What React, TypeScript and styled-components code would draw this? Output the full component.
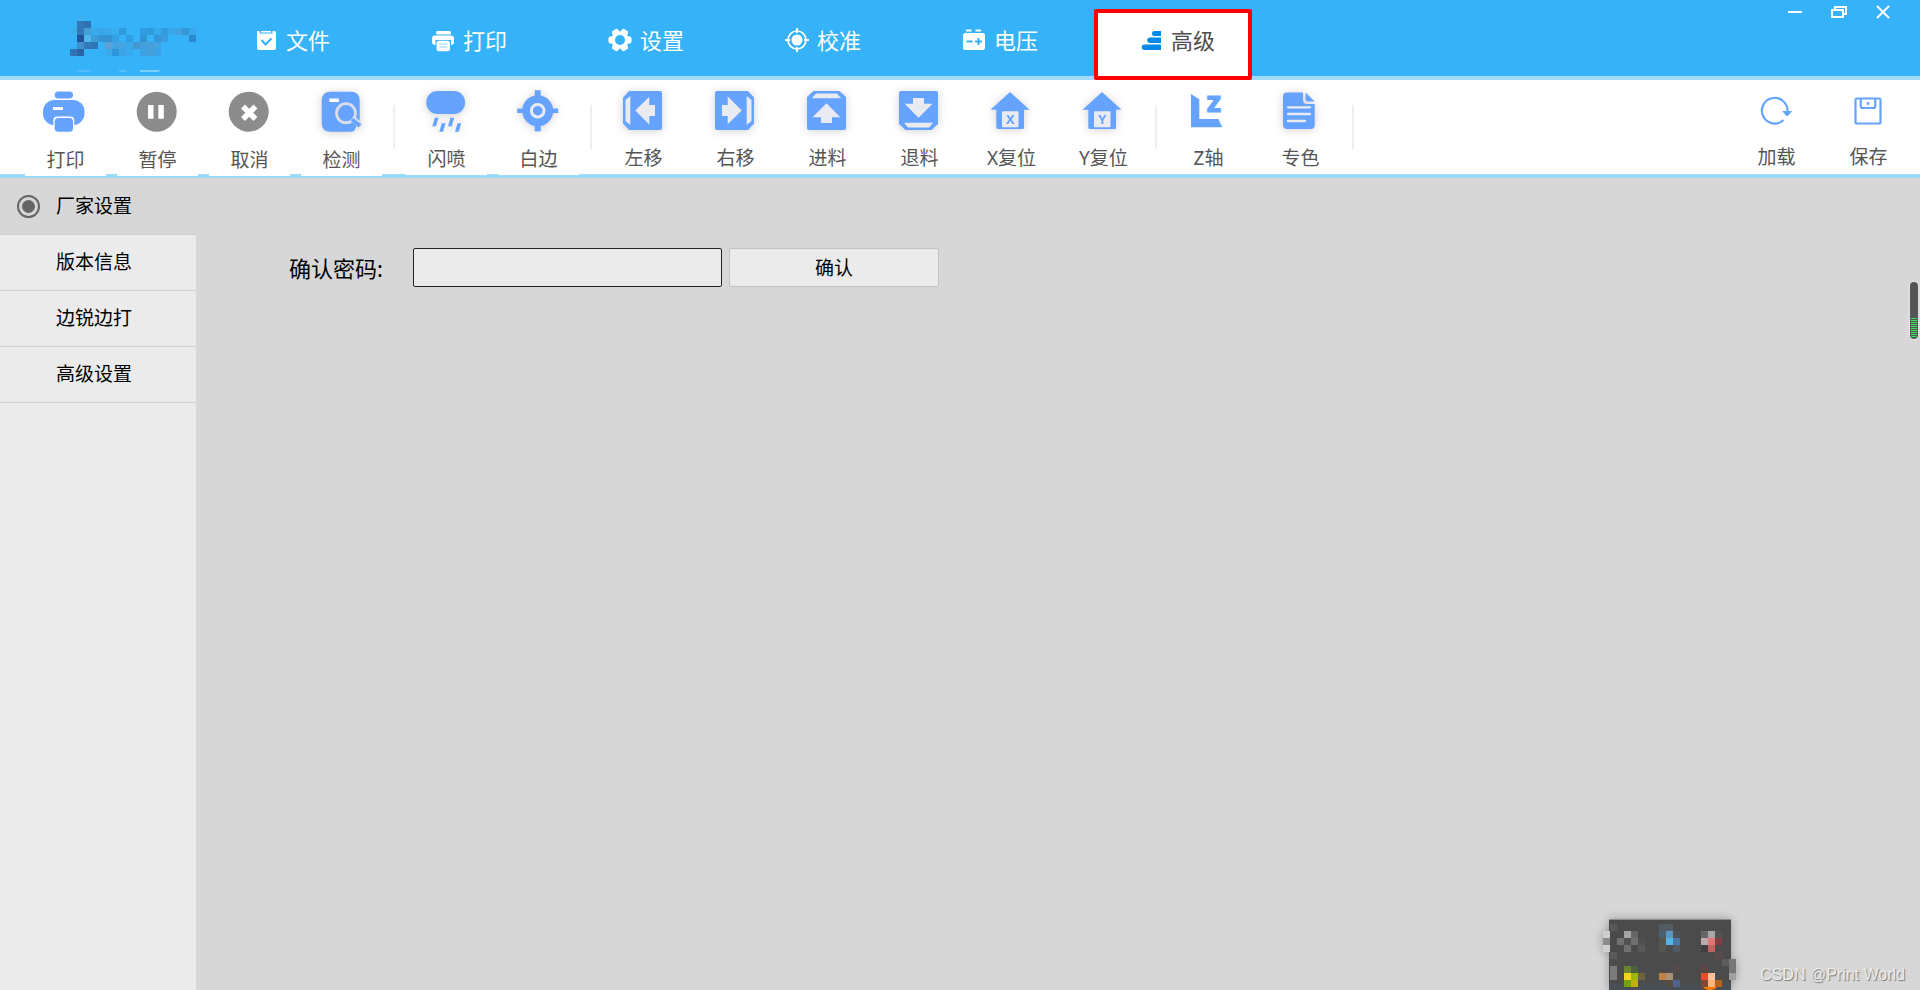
import React, { ReactNode, useState } from "react";
import styled, { createGlobalStyle } from "styled-components";

const BLUE = "#66a3ff";
const PALE = "#e9ebf0";

const GlobalStyle = createGlobalStyle`
  * { box-sizing: border-box; }
  body {
    margin: 0;
    background: #d7d7d7;
    font-family: "Noto Sans", "Noto Sans CJK SC", sans-serif;
    font-weight: 400;
  }
  button, input { font: inherit; }
`;

const Page = styled.div`
  position: relative;
  display: flex;
  flex-direction: column;
  min-height: 100vh;
  overflow: hidden;
`;

const Header = styled.header`
  display: flex;
  height: 80px;
  background: #36b3f8;
  border-bottom: 4px solid #a0dbf7;
`;

const Brand = styled.div`
  flex: none;
  width: 209px;
  padding: 14px 0 0 70px;
`;

const Tabs = styled.nav`
  display: flex;
  gap: 19px;
  height: 80px;
  padding-top: 9px;
`;

const Tab = styled.button<{ $active: boolean }>`
  display: flex;
  align-items: center;
  gap: 8px;
  width: 158px;
  height: 71px;
  padding: 0 0 10px 41px;
  border: 4px solid ${(p) => (p.$active ? "#ff0000" : "transparent")};
  border-radius: 2px;
  background: ${(p) => (p.$active ? "#fff" : "transparent")};
  background-clip: padding-box;
  color: ${(p) => (p.$active ? "#4d4d4d" : "#fff")};
  font-size: 22px;
  line-height: 32px;
  white-space: nowrap;
`;

const WindowControls = styled.div`
  display: flex;
  margin-left: auto;
  padding-right: 15px;
`;

const WindowButton = styled.button`
  display: flex;
  align-items: center;
  justify-content: center;
  width: 44px;
  height: 24px;
  padding: 0;
  border: 0;
  background: transparent;
`;

const Toolbar = styled.div`
  display: flex;
  align-items: flex-start;
  gap: 11px;
  height: 98px;
  padding: 0 11px 0 25px;
  background: #fff;
  border-bottom: 4px solid #9bdcf8;
`;

const ToolButton = styled.button<{ $height: number }>`
  display: flex;
  flex: none;
  flex-direction: column;
  align-items: center;
  justify-content: flex-end;
  gap: 14px;
  width: 81px;
  height: ${(p) => p.$height}px;
  padding: 0 0 4px;
  border: 0;
  background: #fff;
  color: #555;
  font-size: 19px;
  line-height: 24px;
  white-space: nowrap;
`;

const ToolIcon = styled.svg<{ $shadow: boolean }>`
  display: block;
  width: 41px;
  height: 44px;
  overflow: visible;
  filter: ${(p) => (p.$shadow ? "drop-shadow(0 1px 4px rgba(0, 0, 0, 0.18))" : "none")};
`;

const Divider = styled.span`
  flex: none;
  width: 2px;
  height: 44px;
  margin-top: 25px;
  background: #efefef;
`;

const Spacer = styled.span`
  flex: 1;
`;

const Body = styled.div`
  display: flex;
  flex: 1;
`;

const Sidebar = styled.aside`
  flex: none;
  width: 196px;
  background: #ebebeb;
  border-top: 1px solid #d7d7d7;
`;

const SideItem = styled.label<{ $active: boolean }>`
  display: flex;
  align-items: center;
  gap: 16px;
  height: 56px;
  padding: 0 0 1px 17px;
  border-bottom: 1px solid #cfcfcf;
  background: ${(p) => (p.$active ? "#d7d7d7" : "transparent")};
  color: #000;
  font-size: 19px;
  line-height: 28px;
`;

const SideRadio = styled.input`
  appearance: none;
  width: 23px;
  height: 23px;
  margin: 0;
  border: 2px solid transparent;
  border-radius: 50%;
  background-clip: content-box;
  padding: 3px;
  &:checked {
    border-color: #666;
    background-color: #666;
  }
`;

const Main = styled.main`
  flex: 1;
  padding: 70px 0 0 93px;
`;

const PasswordForm = styled.form`
  display: flex;
  align-items: center;
`;

const FieldLabel = styled.label`
  width: 124px;
  color: #000;
  font-size: 22px;
  line-height: 32px;
`;

const PasswordInput = styled.input`
  width: 309px;
  height: 39px;
  padding: 0 8px;
  border: 1px solid #222;
  border-radius: 2px;
  background: #ebebeb;
  font-size: 18px;
  outline: none;
`;

const ConfirmButton = styled.button`
  width: 210px;
  height: 39px;
  margin-left: 7px;
  padding: 0;
  border: 1px solid #c3c3c3;
  border-radius: 2px;
  background: #ebebeb;
  color: #000;
  font-size: 19px;
  line-height: 28px;
`;

const Gauge = styled.div`
  position: absolute;
  top: 282px;
  right: 2px;
  display: flex;
  align-items: flex-end;
  width: 8px;
  height: 57px;
  padding: 1px;
  border-radius: 4px;
  background: #555;
  box-shadow: 0 0 2px 1px #e6e6e6;
`;

const GaugeLevel = styled.div`
  width: 6px;
  height: 20px;
  border-radius: 0 0 3px 3px;
  background: repeating-linear-gradient(#35e05c 0 1px, #555 1px 2px);
`;

const Tray = styled.div`
  position: absolute;
  right: 184px;
  bottom: 0;
  height: 73px;
  filter: drop-shadow(0 0 5px rgba(0, 0, 0, 0.3));
`;

const Watermark = styled.div`
  position: absolute;
  right: 15px;
  bottom: 3px;
  color: #ececec;
  font-family: "Liberation Sans", Arial, sans-serif;
  font-size: 16px;
  line-height: 24px;
  text-shadow: 1px 1px 1px #777;
`;

/* Pixel mosaics: [column, row, colour, run length] on a 7px grid */
type Cell = [number, number, string, number?];

const logoCells: Cell[] = [
  [1, 0, "#3db0f3"],
  [1, 1, "#3379b7"], [2, 1, "#2c72b4"],
  [0, 2, "#3eabeb"], [1, 2, "#3379b3"], [2, 2, "#449fd6"], [3, 2, "#38aaee"], [4, 2, "#3aa6ea"],
  [5, 2, "#39a8ec"], [6, 2, "#37aeee"], [7, 2, "#309bdc"], [10, 2, "#309fe2"], [11, 2, "#2f9bdc"],
  [12, 2, "#35aaee"], [13, 2, "#2f9de0"], [14, 2, "#38a8ea"], [15, 2, "#42a3e2"], [16, 2, "#3397d6"], [17, 2, "#35a8ec"],
  [1, 3, "#22539a"], [2, 3, "#53b6ec"], [3, 3, "#3c9cda"], [4, 3, "#3393d4", 2], [6, 3, "#35a0e0"],
  [8, 3, "#2f9fe4"], [10, 3, "#3093d6"], [12, 3, "#3398da"], [13, 3, "#3a9bde"], [17, 3, "#2c8acf"],
  [1, 4, "#408fcb"], [2, 4, "#3379b8"], [3, 4, "#2d76b8"], [5, 4, "#5c9fd2"], [6, 4, "#45a5e0", 2],
  [8, 4, "#38a9ec"], [9, 4, "#4597d2"], [10, 4, "#3fa0dc"], [11, 4, "#489dd6"], [12, 4, "#42a4e0"],
  [0, 5, "#3174b3"], [1, 5, "#2866a8"], [5, 5, "#3cabea"], [6, 5, "#2b98dd"], [7, 5, "#3aa4e6"],
  [8, 5, "#35aaf0"], [10, 5, "#3fa3e2"], [11, 5, "#45a0dc"], [12, 5, "#35a3e6"],
];

const trayCells: Cell[] = [
  [0, 2, "#cfcfcf"], [0, 3, "#8a8a8a"], [0, 4, "#cfcfcf"],
  [1, 1, "#5a5a5a"], [1, 5, "#5a5a5a"], [1, 7, "#7b7b7b"], [1, 8, "#7b7b7b"],
  [3, 2, "#a5a5a5"], [4, 2, "#666"], [2, 3, "#707070"], [3, 3, "#525252"], [4, 3, "#707070"],
  [3, 4, "#707070"], [5, 4, "#585858"], [5, 3, "#505050"],
  [8, 1, "#515a60"], [9, 1, "#515e66"], [8, 2, "#486070"], [9, 2, "#5a98c4"], [10, 2, "#4a5056"],
  [8, 3, "#56544f"], [9, 3, "#4fb4e9"], [10, 3, "#4877a3"], [8, 4, "#56544f"], [10, 4, "#515a60"],
  [14, 2, "#666"], [15, 2, "#aaa6a6"], [16, 2, "#525454"], [14, 3, "#bcaaac"], [15, 3, "#df7775"],
  [16, 3, "#813d40"], [14, 4, "#404040"], [15, 4, "#c46060"], [16, 5, "#584c4c"],
  [17, 6, "#5c5c5c"], [18, 6, "#777"], [18, 7, "#777"], [18, 8, "#a0a0a0"],
  [3, 7, "#68852d"], [4, 7, "#4d6340"], [3, 8, "#f0d51a"], [4, 8, "#9bb40e"], [5, 8, "#6d643d"],
  [3, 9, "#74a013"], [4, 9, "#c4ac12"],
  [8, 8, "#c08149"], [9, 8, "#a89376"], [10, 7, "#554c4a"], [9, 9, "#574b40"], [10, 9, "#50628e"],
  [14, 7, "#5c4644"], [14, 8, "#e84b2a"], [15, 8, "#ffc19c"], [14, 9, "#7a4a31"], [15, 9, "#ffb47c"], [16, 9, "#b3651f"],
];

const Mosaic = ({ cells }: { cells: Cell[] }) => (
  <g shapeRendering="crispEdges">
    {cells.map(([x, y, fill, run = 1]) => (
      <rect key={`${x}-${y}`} x={x * 7} y={y * 7} width={run * 7} height={7} fill={fill} />
    ))}
  </g>
);

const Logo = () => (
  <svg width="126" height="60" role="img" aria-label="logo">
    <Mosaic cells={logoCells} />
    <path d="M7 56h14v2h-14zM49 56h7v2h-7z" fill="#52bdf8" />
    <path d="M70 56h21l-3 2h-18z" fill="#7ccff9" />
  </svg>
);

const TrayPreview = () => (
  <svg width="133" height="73" viewBox="0 0 133 73" aria-hidden="true">
    <rect x="6" y="2" width="122" height="71" fill="#4b4b4b" />
    <path d="M6 2h122v1H6z" fill="#8d8d8d" />
    <path d="M6 66h122v7H6z" fill="#46505a" opacity=".6" />
    <Mosaic cells={trayCells} />
    <path d="M100 70h14q-2 3-7 3t-7-3z" fill="#ff7a00" />
  </svg>
);

const tabIcons: Record<string, ReactNode> = {
  file: (
    <>
      <path d="M3.500 3H5.500V5.500H18.500V3H20Q22 3 22 5V20Q22 22 20 22H5Q3 22 3 20V4Q3 3 3.500 3Z" fill="#fff" />
      <path d="M7 3h10v1.500H7z" fill="#fff" />
      <path d="M7.500 12l4 4.500 6-6" fill="none" stroke="#36b3f8" strokeWidth="2" />
    </>
  ),
  print: (
    <>
      <rect x="5" y="3" width="15" height="3.500" rx="1.500" fill="#fff" />
      <path d="M4 7.500H20Q23 7.500 23 10.500V14Q23 17 20 17V12H4.500V17Q1 17 1 14V10.500Q1 7.500 4 7.500Z" fill="#fff" />
      <rect x="5.500" y="12.800" width="13.500" height="10.500" rx="2.500" fill="#fff" />
      <path d="M8.500 16h8M8.500 19h8" stroke="#8fd3fa" strokeWidth="1" />
    </>
  ),
  gear: (
    <>
      <g fill="#fff">
        {[30, 90, 150].map((a) => (
          <path
            key={a}
            d="M9.500 1H14.500L16 6V18L14.500 23H9.500L8 18V6Z"
            strokeLinejoin="round"
            stroke="#fff"
            transform={`rotate(${a} 12 12)`}
          />
        ))}
        <circle cx="12" cy="12" r="8" />
      </g>
      <circle cx="12" cy="12" r="5" fill="#36b3f8" />
    </>
  ),
  target: (
    <g fill="none" stroke="#fff" strokeWidth="2">
      <circle cx="12" cy="12" r="9" strokeWidth="1.700" />
      <circle cx="12" cy="12" r="5.500" fill="#fff" stroke="none" />
      <path d="M12 0v5M12 19v5M0 12h5M19 12h5" />
    </g>
  ),
  battery: (
    <>
      <path d="M4 1.500h5.500v2H4zM13.500 1.500H19v2h-5.500z" fill="#fff" />
      <rect x="1" y="5" width="22" height="17" rx="2.500" fill="#fff" />
      <path d="M4.500 13.500h6M13 13.500h7M16.500 10v7" stroke="#36b3f8" strokeWidth="2" />
    </>
  ),
  stairs: (
    <g fill="#058aea">
      <path d="M22 3v5h-6.500a2.500 2.500 0 0 1 0-5z" />
      <path d="M22 9.500v5.500H11a2.700 2.700 0 0 1 0-5.500z" />
      <path d="M22 16.500V22H5.500a2.700 2.700 0 0 1 0-5.500z" />
    </g>
  ),
};

const BoxArrow = ({ angle }: { angle: number }) => (
  <g transform={`rotate(${angle} 19.500 22.500)`}>
    <path d="M6 3H37Q39 3 39 5V40Q39 42 37 42H6L0 35.500V9.500Z" fill={BLUE} />
    <path d="M7.300 8V37L2.500 33V12Z" fill={PALE} />
    <path d="M12.300 22.500L26.300 8.700V17H32V28H26.300V36.500Z" fill={PALE} />
  </g>
);

const House = ({ letter }: { letter: string }) => (
  <>
    <path d="M19 4L38.500 21.700H33V39.500Q33 41 31.500 41H7Q5.300 41 5.300 39.500V21.700H-.5Z" fill={BLUE} />
    <rect x="11" y="23.300" width="16.500" height="16" rx="1" fill={PALE} />
    <text x="19.300" y="36.300" textAnchor="middle" fontFamily="Noto Sans, sans-serif" fontSize="13" fontWeight="700" fill={BLUE}>
      {letter}
    </text>
  </>
);

const toolIcons: Record<string, ReactNode> = {
  print: (
    <>
      <rect x="9.700" y="1.500" width="18.300" height="7" rx="3.500" fill={BLUE} />
      <rect x="-2" y="10" width="41.500" height="25" rx="11.500" fill={BLUE} />
      <rect x="8.300" y="26.500" width="21" height="17" rx="4" fill="#fff" />
      <rect x="9.700" y="28" width="18.300" height="13.700" rx="3.500" fill={BLUE} />
      <path d="M8 17h10v3H8z" fill="#fff" />
    </>
  ),
  pause: (
    <>
      <circle cx="19.700" cy="21.700" r="20" fill="#8c8c8c" />
      <path d="M11 15h5.500v13.700H11zM21.300 15h5.500v13.700h-5.500z" fill="#fff" />
    </>
  ),
  cancel: (
    <>
      <circle cx="19.700" cy="21.700" r="20" fill="#8c8c8c" />
      <path d="M14 16.500l12.500 12.500M26.500 16.500L14 29" stroke="#fff" strokeWidth="5.500" />
    </>
  ),
  inspect: (
    <>
      <path d="M9.700 1.700H29.700Q38.700 1.700 38.700 10.700V30L33 41Q31 41.700 29.700 41.700H9.700Q.700 41.700 .700 32.700V10.700Q.700 1.700 9.700 1.700Z" fill={BLUE} />
      <path d="M8.300 8.500h9.500V12H8.300z" fill="#fff" />
      <circle cx="25" cy="23.200" r="9.500" fill="none" stroke="#d9dde6" strokeWidth="2.800" />
      <path d="M32 29l7.500 6.500" stroke="#d9dde6" strokeWidth="6" />
      <path d="M31 29.500l8 6.500" stroke={BLUE} strokeWidth="4" />
    </>
  ),
  spray: (
    <g fill={BLUE}>
      <rect x=".300" y="2" width="38.700" height="23" rx="11" />
      <path d="M8.800 28.700h3.700l-2.500 8.500H6.300zM15.800 34.200h3.700l-2.500 8.500h-3.700zM24.500 28.700h3.700l-2.500 8.500H22zM31.500 34.200h3.700l-2.500 8.500H29z" />
    </g>
  ),
  margin: (
    <>
      <circle cx="19.700" cy="21.700" r="15.500" fill={BLUE} />
      <path d="M16.700 1.200h6v41h-6zM-.800 19.500h41V24h-41z" fill={BLUE} />
      <circle cx="19.700" cy="21.700" r="6.300" fill={BLUE} stroke={PALE} strokeWidth="3" />
    </>
  ),
  left: <BoxArrow angle={0} />,
  right: <BoxArrow angle={180} />,
  feed: <BoxArrow angle={90} />,
  retract: <BoxArrow angle={-90} />,
  homeX: <House letter="X" />,
  homeY: <House letter="Y" />,
  axis: (
    <>
      <path d="M3 6L11.300 11.300V31H30.300L34.300 39.300H3Z" fill={BLUE} />
      <text x="25.700" y="24" textAnchor="middle" fontFamily="Noto Sans, sans-serif" fontSize="23" fontWeight="900" fill={BLUE} stroke={BLUE}>
        Z
      </text>
    </>
  ),
  spot: (
    <>
      <path d="M7 4.500H23V12Q23 16 27 16H34.700V37Q34.700 41 31 41H7Q3 41 3 37V8.500Q3 4.500 7 4.500Z" fill={BLUE} />
      <path d="M25.500 4.500L34.700 13.500H28Q25.500 13.500 25.500 11Z" fill={BLUE} />
      <path d="M8 19.300h22M8 26h22M8 33h17" stroke={PALE} strokeWidth="2.300" strokeLinecap="round" />
    </>
  ),
  reload: (
    <>
      <path d="M27.500 33A12.800 12.800 0 1 1 31.500 24" fill="none" stroke={BLUE} strokeWidth="2.200" />
      <path d="M27 24.500h8.500L31 29z" fill={BLUE} stroke={BLUE} strokeLinejoin="round" />
    </>
  ),
  save: (
    <g fill="none" stroke={BLUE} strokeWidth="2.200">
      <rect x="7.500" y="11.500" width="25" height="25" rx="1.500" />
      <path d="M12.700 11.500V19Q12.700 21 14.700 21H25.300Q27.300 21 27.300 19V11.500" />
      <path d="M18.700 16.500h2.600" strokeWidth="2.600" />
    </g>
  ),
};

const tabs = [
  { icon: "file", label: "文件" },
  { icon: "print", label: "打印" },
  { icon: "gear", label: "设置" },
  { icon: "target", label: "校准" },
  { icon: "battery", label: "电压" },
  { icon: "stairs", label: "高级" },
];

interface Tool { icon: string; label: string; flat?: boolean }
interface ToolGroup { height: number; tools: Tool[] }

const toolGroups: ToolGroup[] = [
  {
    height: 96,
    tools: [
      { icon: "print", label: "打印", flat: true },
      { icon: "pause", label: "暂停", flat: true },
      { icon: "cancel", label: "取消", flat: true },
      { icon: "inspect", label: "检测" },
    ],
  },
  { height: 95, tools: [{ icon: "spray", label: "闪喷" }, { icon: "margin", label: "白边" }] },
  {
    height: 94,
    tools: [
      { icon: "left", label: "左移" },
      { icon: "right", label: "右移" },
      { icon: "feed", label: "进料" },
      { icon: "retract", label: "退料" },
      { icon: "homeX", label: "X复位" },
      { icon: "homeY", label: "Y复位" },
    ],
  },
  { height: 94, tools: [{ icon: "axis", label: "Z轴", flat: true }, { icon: "spot", label: "专色" }] },
];

const storageTools: Tool[] = [
  { icon: "reload", label: "加载", flat: true },
  { icon: "save", label: "保存", flat: true },
];

const sections = ["厂家设置", "版本信息", "边锐边打", "高级设置"];

const ToolItem = ({ tool, height }: { tool: Tool; height: number }) => (
  <ToolButton type="button" $height={height}>
    <ToolIcon viewBox="0 0 41 44" $shadow={!tool.flat} aria-hidden="true">
      {toolIcons[tool.icon]}
    </ToolIcon>
    {tool.label}
  </ToolButton>
);

export default function App() {
  const [tab, setTab] = useState("高级");
  const [section, setSection] = useState(sections[0]);

  return (
    <Page>
      <GlobalStyle />
      <Header>
        <Brand>
          <Logo />
        </Brand>
        <Tabs>
          {tabs.map((t) => (
            <Tab key={t.label} type="button" $active={t.label === tab} onClick={() => setTab(t.label)}>
              <svg width="24" height="24" viewBox="0 0 24 24" aria-hidden="true">{tabIcons[t.icon]}</svg>
              {t.label}
            </Tab>
          ))}
        </Tabs>
        <WindowControls>
          <WindowButton type="button" aria-label="最小化">
            <svg width="16" height="16"><path d="M1 8h14" stroke="#fff" strokeWidth="2" /></svg>
          </WindowButton>
          <WindowButton type="button" aria-label="还原">
            <svg width="16" height="16" fill="none" stroke="#fff" strokeWidth="2">
              <path d="M1 6h11v7H1zM4 6V3h11v7h-3" />
            </svg>
          </WindowButton>
          <WindowButton type="button" aria-label="关闭">
            <svg width="16" height="16"><path d="M2 2l12 12M14 2L2 14" stroke="#fff" strokeWidth="2" /></svg>
          </WindowButton>
        </WindowControls>
      </Header>

      <Toolbar>
        {toolGroups.map((group) => (
          <React.Fragment key={group.tools[0].label}>
            {group.tools.map((tool) => (
              <ToolItem key={tool.label} tool={tool} height={group.height} />
            ))}
            <Divider />
          </React.Fragment>
        ))}
        <Spacer />
        {storageTools.map((tool) => (
          <ToolItem key={tool.label} tool={tool} height={93} />
        ))}
      </Toolbar>

      <Body>
        <Sidebar>
          {sections.map((name) => (
            <SideItem key={name} $active={name === section}>
              <SideRadio type="radio" name="section" checked={name === section} onChange={() => setSection(name)} />
              {name}
            </SideItem>
          ))}
        </Sidebar>
        <Main>
          <PasswordForm onSubmit={(e) => e.preventDefault()}>
            <FieldLabel htmlFor="password">确认密码:</FieldLabel>
            <PasswordInput id="password" type="password" />
            <ConfirmButton type="submit">确认</ConfirmButton>
          </PasswordForm>
        </Main>
      </Body>

      <Gauge>
        <GaugeLevel />
      </Gauge>
      <Tray>
        <TrayPreview />
      </Tray>
      <Watermark>CSDN @Print World</Watermark>
    </Page>
  );
}
